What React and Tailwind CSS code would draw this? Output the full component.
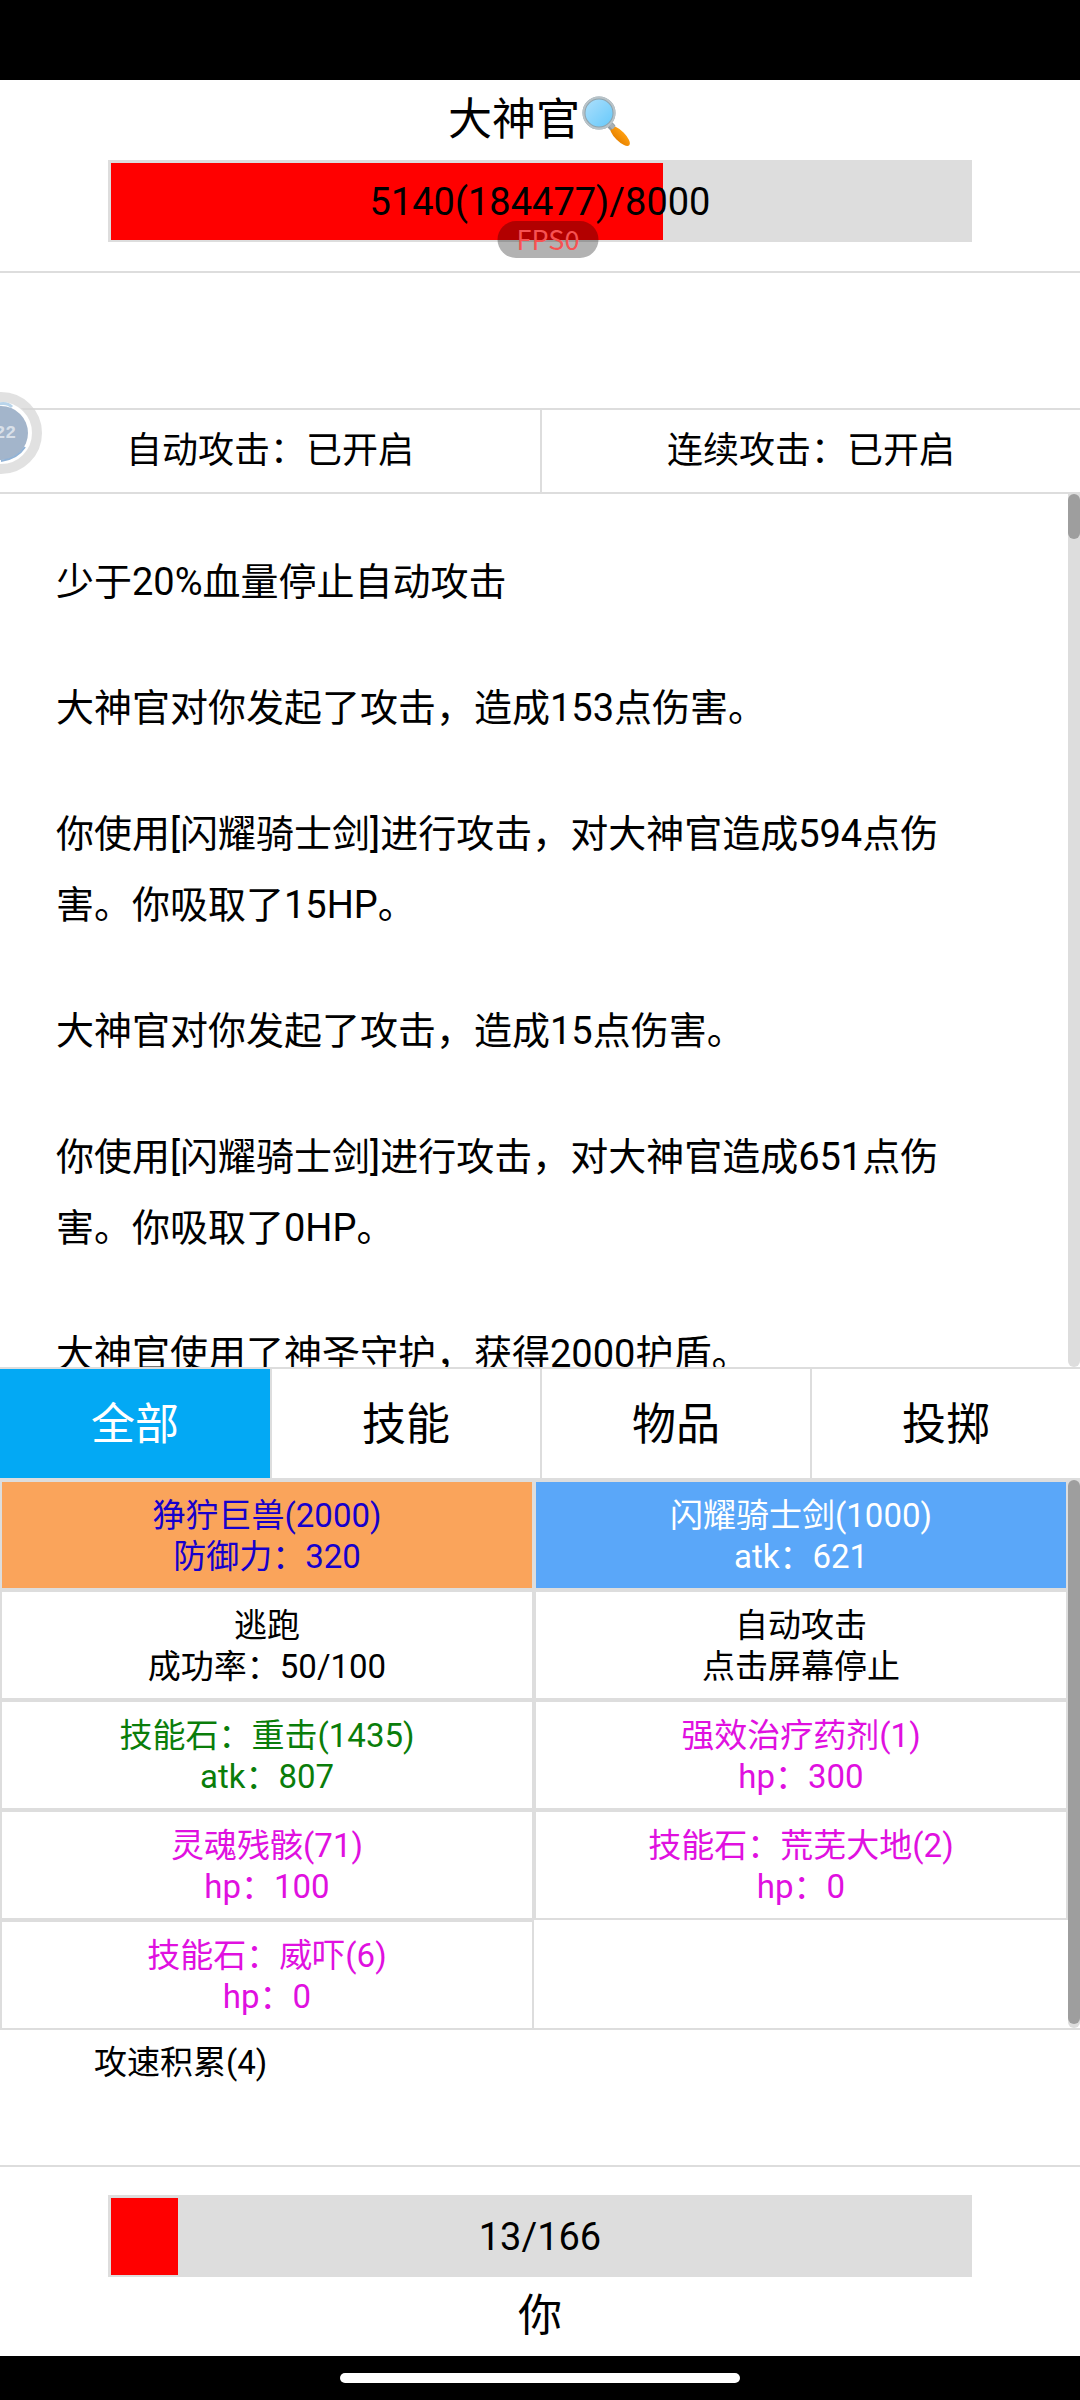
import clsx from 'clsx'

const LOGS = [
  '少于20%血量停止自动攻击',
  '大神官对你发起了攻击，造成153点伤害。',
  '你使用[闪耀骑士剑]进行攻击，对大神官造成594点伤害。你吸取了15HP。',
  '大神官对你发起了攻击，造成15点伤害。',
  '你使用[闪耀骑士剑]进行攻击，对大神官造成651点伤害。你吸取了0HP。',
  '大神官使用了神圣守护，获得2000护盾。',
]

const TABS = ['全部', '技能', '物品', '投掷']

const ITEMS = [
  { name: '狰狞巨兽(2000)', detail: '防御力：320', style: 'bg-[#faa45b] text-[#1600cc]' },
  { name: '闪耀骑士剑(1000)', detail: 'atk：621', style: 'bg-[#5aa7f9] text-white' },
  { name: '逃跑', detail: '成功率：50/100', style: 'bg-white text-black' },
  { name: '自动攻击', detail: '点击屏幕停止', style: 'bg-white text-black' },
  { name: '技能石：重击(1435)', detail: 'atk：807', style: 'bg-white text-[#0a7d0a]' },
  { name: '强效治疗药剂(1)', detail: 'hp：300', style: 'bg-white text-[#e010e0]' },
  { name: '灵魂残骸(71)', detail: 'hp：100', style: 'bg-white text-[#e010e0]' },
  { name: '技能石：荒芜大地(2)', detail: 'hp：0', style: 'bg-white text-[#e010e0]' },
  { name: '技能石：威吓(6)', detail: 'hp：0', style: 'bg-white text-[#e010e0]' },
]

function Magnifier() {
  return (
    <svg viewBox="0 0 52 52" className="h-[52px] w-[52px]" aria-hidden="true">
      <defs>
        <linearGradient id="lens" x1="0" y1="0" x2="1" y2="1">
          <stop offset="0" stopColor="#b0e0fb" />
          <stop offset="1" stopColor="#62c8fb" />
        </linearGradient>
        <linearGradient id="handle" x1="0" y1="1" x2="0" y2="0">
          <stop offset="0" stopColor="#e88300" />
          <stop offset="1" stopColor="#ff9f10" />
        </linearGradient>
      </defs>
      <ellipse cx="40" cy="42" rx="13" ry="5" transform="rotate(45 40 42)" fill="url(#handle)" />
      <path d="M29 35l5-5" stroke="#8f9aa0" strokeWidth="4" />
      <path d="M29 29l5 5" stroke="#a8b0b4" strokeWidth="4" />
      <circle cx="19" cy="19" r="15" fill="url(#lens)" stroke="#8fa4ae" strokeWidth="3" />
      <circle cx="19" cy="19" r="15.5" fill="none" stroke="#b9c3c8" strokeWidth="2" />
    </svg>
  )
}

function HealthBar({ value, max, label }) {
  return (
    <div className="relative mx-auto h-[82px] w-4/5 bg-[#ddd] pt-[3px] pr-0.5 pb-0.5 pl-[3px]">
      <div className="h-full bg-[#f00]" style={{ width: `${(value / max) * 100}%` }} />
      <span className="absolute inset-0 flex items-center justify-center pt-0.5 text-[38px]">{label}</span>
    </div>
  )
}

// Half of the ball is docked behind the left edge of the screen
function FloatBall() {
  return (
    <div className="absolute -top-[18px] -left-10 h-[82px] w-[82px]">
      <svg viewBox="0 0 82 82" className="h-full w-full" aria-hidden="true">
        <circle cx="41" cy="41" r="32" fill="#fff" />
        <circle cx="41" cy="41" r="36" fill="none" stroke="#d4d4d4" strokeOpacity="0.7" strokeWidth="10" />
        <circle cx="41" cy="41" r="27" fill="#a3b5cb" />
        <path d="M36 13q10-4 16 2" fill="none" stroke="#b9d4ea" strokeWidth="3" />
        <path d="M41 69q16-2 24-14" fill="none" stroke="#90b2d6" strokeWidth="2" />
      </svg>
      <span className="absolute inset-y-0 right-[26px] flex items-center font-['Liberation_Mono',monospace] text-lg font-bold text-white/60">
        22
      </span>
    </div>
  )
}

function Scrollbar({ thumb }) {
  return (
    <div className="w-3 shrink-0 rounded-b-full bg-[#ddd]">
      <div className={clsx('w-full rounded-full bg-[#9e9e9e]', thumb)} />
    </div>
  )
}

export default function App() {
  return (
    <div className="flex h-screen flex-col overflow-hidden bg-white font-['Roboto','Noto_Sans_CJK_SC',sans-serif] text-black">
      <div className="h-20 shrink-0 bg-black" />

      <header className="relative shrink-0 border-b-2 border-[#ddd] pb-[29px]">
        <h1 className="flex h-20 items-center justify-center text-[44px]">
          大神官
          <Magnifier />
        </h1>
        <HealthBar value={5140} max={8000} label="5140(184477)/8000" />
        <div className="absolute bottom-[13px] left-1/2 ml-2 flex h-[37px] w-[101px] -translate-x-1/2 items-center justify-center rounded-full bg-black/30 font-['Noto_Sans_CJK_SC',sans-serif] text-[27px] text-[#f75252]">
          FPS0
        </div>
      </header>

      <div className="relative mt-[135px] grid shrink-0 grid-cols-2 border-y-2 border-[#ddd]">
        <button className="h-[82px] text-4xl">自动攻击：已开启</button>
        <button className="h-[82px] border-l-2 border-[#ddd] text-4xl">连续攻击：已开启</button>
        <FloatBall />
      </div>

      <main className="flex min-h-0 flex-1">
        <div className="flex min-w-0 flex-1 flex-col gap-[55px] overflow-hidden px-14 pt-[53px]">
          {LOGS.map((log) => (
            <p key={log} className="shrink-0 text-[38px] leading-[71px]">{log}</p>
          ))}
        </div>
        <Scrollbar thumb="h-[45px]" />
      </main>

      <nav className="grid shrink-0 grid-cols-4 border-y-2 border-[#ddd]">
        {TABS.map((tab, i) => (
          <button
            key={tab}
            className={clsx('h-[109px] pt-0.5 text-[44px]', i === 0 ? 'bg-[#03a9f4] text-white' : 'border-l-2 border-[#ddd]')}
          >
            {tab}
          </button>
        ))}
      </nav>

      <section className="flex shrink-0 border-b-2 border-[#ddd]">
        <div className="-mb-0.5 grid flex-1 grid-cols-2">
          {ITEMS.map((item) => (
            <button
              key={item.name}
              className={clsx('border-2 border-[#ddd] pt-[13px] pb-[11px] text-[33px] leading-[41px]', item.style)}
            >
              <span className="block">{item.name}</span>
              <span className="block">{item.detail}</span>
            </button>
          ))}
        </div>
        <Scrollbar thumb="h-[544px]" />
      </section>

      <div className="h-[135px] shrink-0 px-[94px] pt-3 text-[33px] leading-[41px]">攻速积累(4)</div>

      <footer className="shrink-0 border-t-2 border-[#ddd] pt-7">
        <HealthBar value={13} max={166} label="13/166" />
        <h2 className="flex h-[79px] items-center justify-center pb-0.5 text-[44px]">你</h2>
      </footer>

      <div className="flex h-11 shrink-0 items-center justify-center bg-black">
        <div className="h-2.5 w-[400px] rounded-full bg-white" />
      </div>
    </div>
  )
}
